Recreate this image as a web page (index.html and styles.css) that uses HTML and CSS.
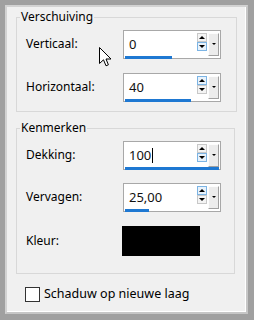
FILE: index.html
```html
<!DOCTYPE html>
<html>
<head>
<meta charset="utf-8">
<link rel="stylesheet" href="styles.css">
</head>
<body>
<div class="frame">
  <div class="bevel">
    <div class="window">
      <fieldset class="group g1">
        <legend>Verschuiving</legend>
        <div class="row">
          <span class="label">Verticaal:</span>
          <div class="spin">
            <span class="value">0</span>
            <div class="arrows">
              <span class="arr up"></span>
              <span class="arr down hot"></span>
            </div>
            <span class="drop"></span>
            <div class="bar"><div class="fill" style="width:50%"></div></div>
          </div>
        </div>
        <div class="row">
          <span class="label">Horizontaal:</span>
          <div class="spin">
            <span class="value">40</span>
            <div class="arrows">
              <span class="arr up hot"></span>
              <span class="arr down"></span>
            </div>
            <span class="drop"></span>
            <div class="bar"><div class="fill" style="width:70%"></div></div>
          </div>
        </div>
      </fieldset>
      <fieldset class="group g2">
        <legend>Kenmerken</legend>
        <div class="row">
          <span class="label">Dekking:</span>
          <div class="spin">
            <span class="value">100<span class="caret"></span></span>
            <div class="arrows">
              <span class="arr up"></span>
              <span class="arr down hot"></span>
            </div>
            <span class="drop"></span>
            <div class="bar"><div class="fill" style="width:100%"></div></div>
          </div>
        </div>
        <div class="row">
          <span class="label">Vervagen:</span>
          <div class="spin">
            <span class="value">25,00</span>
            <div class="arrows">
              <span class="arr up hot"></span>
              <span class="arr down"></span>
            </div>
            <span class="drop"></span>
            <div class="bar"><div class="fill" style="width:25%"></div></div>
          </div>
        </div>
        <div class="row kleur">
          <span class="label">Kleur:</span>
          <span class="swatch"></span>
        </div>
      </fieldset>
      <label class="check">
        <span class="box"></span>
        <span class="ctext">Schaduw op nieuwe laag</span>
      </label>
    </div>
  </div>
  <svg class="cursor" width="13" height="21" viewBox="0 0 13 21">
    <path d="M0.5 0.5 L0.5 16.5 L4.5 12.8 L7 18.8 L9.4 17.8 L7 12 L12 12 Z" fill="#fff" stroke="#000" stroke-width="1" stroke-linejoin="miter"/>
  </svg>
</div>
</body>
</html>
```
FILE: styles.css
```css
html, body {
  margin: 0;
  padding: 0;
}
body {
  width: 254px;
  height: 320px;
  overflow: hidden;
  font-family: "Noto Sans", "Open Sans", sans-serif;
  font-size: 12px;
  color: #000;
}
.frame {
  position: relative;
  box-sizing: border-box;
  width: 254px;
  height: 320px;
  background: #a0a0a0;
  padding: 5px 6px 6px 5px;
}
.bevel {
  height: 100%;
  box-sizing: border-box;
  border: 2px solid;
  border-color: #d2d2d2 #c6c6c6 #c6c6c6 #d2d2d2;
}
.window {
  height: 100%;
  box-sizing: border-box;
  background: #f0f0f0;
  border-right: 1px solid #fff;
  border-bottom: 1px solid #fff;
  padding: 0 8px 0 9px;
  display: flex;
  flex-direction: column;
}
.group {
  margin: 0;
  border: 1px solid #d8d8d8;
  padding: 5px 0 9px 8px;
  display: flex;
  flex-direction: column;
  gap: 14px;
  min-width: 0;
}
.g1 {
  margin-top: 2px;
}
.g2 {
  margin-top: 8px;
  margin-right: 2px;
  padding-bottom: 17px;
  gap: 13px;
}
.g2 .kleur {
  margin-top: 1px;
}
legend {
  padding: 0 1px;
  margin-left: -5px;
  line-height: 16px;
  font-size: 12px;
}
.row {
  display: flex;
  align-items: center;
  height: 29px;
}
.row.kleur {
  height: 30px;
}
.label {
  width: 98px;
  flex: none;
  font-size: 12px;
  margin-top: -2px;
  padding-left: 1px;
  margin-right: -1px;
}
.spin {
  box-sizing: border-box;
  width: 98px;
  height: 29px;
  border: 1px solid #a8a8a8;
  background: #fff;
  display: grid;
  grid-template-columns: 1fr 10px 12px;
  grid-template-rows: 1fr 3px;
  padding: 1px 1px 1px 0;
  column-gap: 0;
}
.value {
  padding-left: 5px;
  font-size: 13px;
  line-height: 22px;
  color: #111;
  display: flex;
  align-items: center;
}
.caret {
  display: inline-block;
  width: 1px;
  height: 15px;
  background: #000;
  margin-left: 1px;
}
.arrows {
  display: flex;
  flex-direction: column;
  gap: 0;
  padding-top: 1px;
}
.arr {
  box-sizing: border-box;
  width: 10px;
  height: 9px;
  border: 1px solid #c8c8c8;
  background: #f4f4f4;
  position: relative;
  display: block;
}
.arr.hot {
  border-color: #7cb4e4;
  background: #e8f2fb;
}
.arr::after {
  content: "";
  position: absolute;
  left: 1px;
  width: 0;
  height: 0;
  border-left: 3px solid transparent;
  border-right: 3px solid transparent;
}
.arr.up::after {
  top: 2px;
  border-bottom: 3px solid #000;
}
.arr.down::after {
  top: 2px;
  border-top: 3px solid #000;
}
.drop {
  box-sizing: border-box;
  margin-left: 1px;
  width: 11px;
  height: 23px;
  margin-top: 1px;
  background: #ececec;
  border-right: 1px solid #a0a0a0;
  border-bottom: 1px solid #a0a0a0;
  border-top: 1px solid #fdfdfd;
  border-left: 1px solid #fdfdfd;
  position: relative;
}
.drop::after {
  content: "";
  position: absolute;
  left: 3px;
  top: 9px;
  border-left: 2px solid transparent;
  border-right: 2px solid transparent;
  border-top: 2px solid #000;
}
.bar {
  grid-column: 1 / 4;
  padding-left: 1px;
}
.fill {
  height: 3px;
  background: #1e78d2;
}
.swatch {
  width: 78px;
  height: 30px;
  background: #000;
  margin-left: -1px;
}
.check {
  display: flex;
  align-items: center;
  margin-top: 12px;
  padding-left: 9px;
  gap: 4px;
}
.box {
  box-sizing: border-box;
  width: 15px;
  height: 15px;
  border: 1px solid #333;
  background: #fff;
  flex: none;
}
.ctext {
  font-size: 12.5px;
  line-height: 16px;
}
.cursor {
  position: absolute;
  left: 99px;
  top: 47px;
}
```
